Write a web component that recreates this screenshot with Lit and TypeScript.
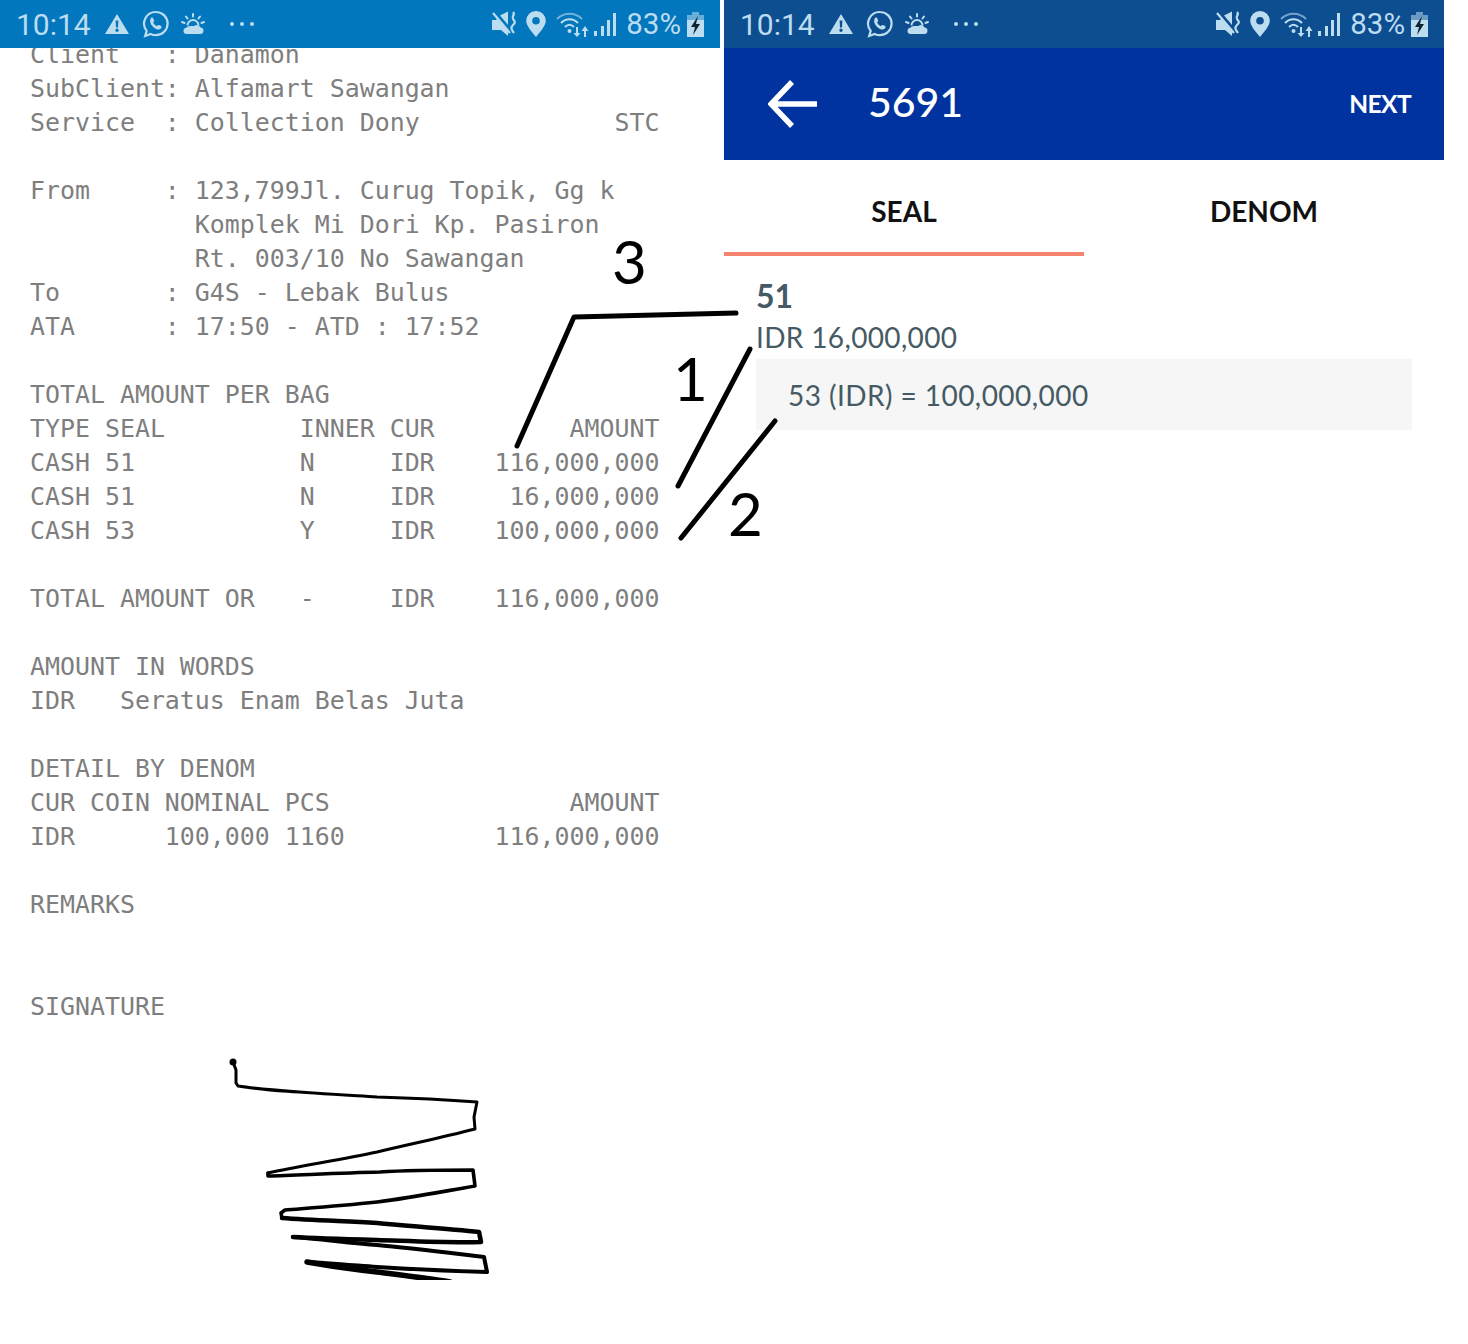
import { LitElement, css, html, svg } from "lit";
import { customElement } from "lit/decorators.js";

const RECEIPT = [
  "Client   : Danamon",
  "SubClient: Alfamart Sawangan",
  "Service  : Collection Dony             STC",
  "",
  "From     : 123,799Jl. Curug Topik, Gg k",
  "           Komplek Mi Dori Kp. Pasiron",
  "           Rt. 003/10 No Sawangan",
  "To       : G4S - Lebak Bulus",
  "ATA      : 17:50 - ATD : 17:52",
  "",
  "TOTAL AMOUNT PER BAG",
  "TYPE SEAL         INNER CUR         AMOUNT",
  "CASH 51           N     IDR    116,000,000",
  "CASH 51           N     IDR     16,000,000",
  "CASH 53           Y     IDR    100,000,000",
  "",
  "TOTAL AMOUNT OR   -     IDR    116,000,000",
  "",
  "AMOUNT IN WORDS",
  "IDR   Seratus Enam Belas Juta",
  "",
  "DETAIL BY DENOM",
  "CUR COIN NOMINAL PCS                AMOUNT",
  "IDR      100,000 1160          116,000,000",
  "",
  "REMARKS",
  "",
  "",
  "SIGNATURE",
].join("\n");

const statusBar = (cls: string) => html`
  <div class="status ${cls}">
    <span class="time">10:14</span>
    <svg class="ic" style="margin-left:14px" width="24" height="22" viewBox="0 0 24 22">
      <path fill="currentColor" fill-rule="evenodd" d="M12 1 24 21H0ZM10.6 7.5l.4 7h2l.4-7ZM12 15.5a1.7 1.7 0 1 0 0 3.4 1.7 1.7 0 0 0 0-3.4Z" />
    </svg>
    <svg class="ic" style="margin-left:13px" width="28" height="28" viewBox="0 0 28 28">
      <path fill="none" stroke="currentColor" stroke-width="2.2" d="M14 2a11.6 11.6 0 0 1 0 23.2c-2 0-3.800-.5-5.400-1.300L3.200 26l1.500-5.100A11.600 11.600 0 0 1 14 2Z" />
      <path fill="currentColor" d="M10 7.500c.7 0 1 .2 1.300 1l.8 2c.1.500 0 .8-.3 1.200l-.7.800c.9 1.700 2.200 2.900 3.900 3.800l.9-1c.3-.3.700-.4 1.100-.2l2 1c.5.300.7.500.6 1-.2 1.600-1.400 2.500-3 2.500-3.800-.2-8.200-4.400-8.500-8.400 0-1.700.7-3.700 1.900-3.700Z" />
    </svg>
    <svg class="ic" style="margin-left:11px" width="24" height="22" viewBox="0 0 24 22">
      <path fill="currentColor" d="M5 21h14a3.200 3.200 0 0 0 .5-6.400A4 4 0 0 0 16 12c-1 0-1.800.4-2.500 1H9.300a4.500 4.500 0 0 0-4 1.700A3.200 3.200 0 0 0 5 21Z" />
      <path fill="currentColor" d="M5.500 12.500a6.500 6.500 0 0 1 13 0h-2a4.500 4.500 0 0 0-9 0Z" />
      <path fill="none" stroke="currentColor" stroke-width="2" stroke-linecap="round" d="M12 1v2.500M5 3.500l1.500 2M19 3.500l-1.500 2M1 9l2.500 1M23 9l-2.500 1" />
    </svg>
    <span class="dots"><i></i><i></i><i></i></span>
    <span class="spacer"></span>
    <svg class="ic" width="26" height="26" viewBox="0 0 26 26">
      <path fill="currentColor" d="M0 9h4l1-1 11 11v6l-7-6H0ZM8 4.500l8-4v13.500Z" />
      <path fill="none" stroke="currentColor" stroke-width="2.200" d="M1 2l17 20" />
      <path fill="none" stroke="currentColor" stroke-width="2.200" d="M21 1c3 3-2 4 0 7s3 3 0 6-1 5 1 8" />
    </svg>
    <svg class="ic" style="margin-left:8px" width="20" height="26" viewBox="0 0 20 26">
      <path fill="currentColor" fill-rule="evenodd" d="M10 0a9.800 9.800 0 0 1 9.800 9.800C19.800 15 14 21 10 26 6 21 .2 15 .2 9.800A9.800 9.800 0 0 1 10 0Zm0 6a3.800 3.800 0 1 0 0 7.600A3.800 3.800 0 0 0 10 6Z" />
    </svg>
    <svg class="ic" style="margin-left:10px" width="34" height="26" viewBox="0 0 34 26">
      <g fill="none" stroke="currentColor" stroke-width="2">
        <path opacity=".6" d="M1 8c7-7 18-7 25 0" />
        <path d="M5 12c5-5 12-5 17 0M9 16c3-3 6-3 9 0" />
      </g>
      <circle cx="13.500" cy="20" r="2" fill="currentColor" />
      <path fill="currentColor" d="M20 16h2v6h2.500l-3.500 4-3.500-4H20ZM28 26h2v-6h2.500L29 15l-3.500 5H28Z" />
    </svg>
    <svg class="ic" style="margin-left:3px" width="24" height="26" viewBox="0 0 24 26">
      <path fill="currentColor" d="M1 20h3v5H1ZM8 15h3v10H8ZM14 9h3v16h-3ZM20 2h3v23h-3Z" />
    </svg>
    <span class="pct">83%</span>
    <svg class="ic" style="margin-left:6px" width="17" height="25" viewBox="0 0 17 25">
      <path fill="currentColor" opacity=".55" d="M5 0h7v3h5v5H0V3h5Z" />
      <path fill="currentColor" d="M0 8h17v17H0Z" />
      <path fill="#10242f" d="M11 4 4 15h4l-2 8 7-11H9Z" />
    </svg>
  </div>
`;

const SIGNATURE_PATHS = [
  ["M23 22 26 30 26 43 28 46C60 51 100 53 167 57 200 58 240 60 267 62L264 77 265 89C230 98 200 104 167 112 130 120 90 126 58 133", 3],
  ["M58 133 58 136C90 135 130 133 170 132 200 130 240 130 263 130L265 146C230 152 200 158 167 162 130 166 100 168 75 170L71 173 72 178", 3.600],
  ["M72 178C100 180 130 181 167 183 200 186 240 189 269 192L271 202C240 203 200 201 167 200 130 199 100 198 83 197", 4.600],
  ["M83 197C110 199 140 203 167 205 200 208 240 213 274 217L277 232C240 231 200 229 167 227 140 225 115 223 97 222", 4],
  ["M97 222C120 226 140 229 167 232 190 235 215 238 240 242", 5.500],
] as const;

const ANNOTATIONS = [
  "M517 446 574 317 736 313",
  "M750 349 678 486",
  "M775 421 681 538",
];

@customElement("app-root")
export class AppRoot extends LitElement {
  static styles = css`
    :host {
      display: block;
      position: relative;
      width: 1468px;
      height: 1344px;
      background: #fff;
      overflow: hidden;
    }

    .phones {
      display: flex;
      gap: 4px;
      width: 1444px;
      height: 1280px;
    }

    .phone {
      width: 720px;
      display: flex;
      flex-direction: column;
      overflow: hidden;
    }

    .status {
      flex: none;
      height: 48px;
      padding: 0 16px;
      box-sizing: border-box;
      display: flex;
      align-items: center;
      font-family: Roboto, sans-serif;
      font-size: 30px;
      color: #bcdcf0;
    }

    .status.light {
      background: #0277bd;
    }

    .status.dark {
      background: #0d4e90;
    }

    .ic {
      flex: none;
      display: block;
    }

    .spacer {
      flex: 1;
    }

    .dots {
      display: flex;
      gap: 6px;
      margin-left: 25px;
    }

    .dots i {
      width: 4px;
      height: 4px;
      border-radius: 50%;
      background: currentColor;
    }

    .pct {
      margin-left: 9px;
      font-size: 29.500px;
      line-height: 50px;
    }

    .receipt {
      flex: 1;
      min-height: 0;
      overflow: hidden;
    }

    pre {
      margin: -10px 0 0;
      padding-left: 30px;
      font-family: "DejaVu Sans Mono", monospace;
      font-size: 24.9px;
      line-height: 34px;
      color: #7e7e7e;
    }

    .sig {
      display: block;
      margin: 16px 0 0 210px;
    }

    .appbar {
      flex: none;
      height: 112px;
      display: flex;
      align-items: center;
      padding: 0 33px 0 44px;
      background: #0033a0;
      color: #fff;
      font-family: Lato, sans-serif;
    }

    .appbar h1 {
      flex: 1;
      margin: 0 0 6px 51px;
      font-size: 41px;
      font-weight: 500;
    }

    .next {
      margin-bottom: 2px;
      font-size: 24.500px;
      font-weight: 700;
      letter-spacing: -0.6px;
    }

    .tabs {
      flex: none;
      display: flex;
      height: 96px;
      font-family: Lato, sans-serif;
      font-size: 28px;
      font-weight: 700;
      color: #111;
    }

    .tab {
      flex: 1;
      display: flex;
      align-items: center;
      justify-content: center;
      box-sizing: border-box;
      padding-top: 6px;
    }

    .tab.active {
      border-bottom: 4px solid #f4846e;
      padding-top: 10px;
    }

    .seal {
      padding: 20px 32px 0;
      font-family: Lato, sans-serif;
      color: #455a64;
    }

    .seal-id {
      font-size: 32px;
      font-weight: 700;
      line-height: 40px;
    }

    .seal-total {
      font-size: 28px;
      line-height: 43px;
      letter-spacing: 0.35px;
    }

    .seal-row {
      height: 71px;
      display: flex;
      align-items: center;
      padding-left: 32px;
      background: #f6f6f6;
      font-size: 28px;
      letter-spacing: 0.45px;
    }

    .marks {
      position: absolute;
      inset: 0;
      pointer-events: none;
    }

    .num {
      position: absolute;
      font-family: Lato, sans-serif;
      font-size: 60px;
      line-height: 60px;
      color: #000;
    }

    .n1 {
      left: 673px;
      top: 348px;
    }

    .n2 {
      left: 728px;
      top: 483px;
    }

    .n3 {
      left: 612px;
      top: 231px;
    }
  `;

  render() {
    return html`
      <div class="phones">
        <section class="phone">
          ${statusBar("light")}
          <div class="receipt">
            <pre>${RECEIPT}</pre>
            <svg class="sig" width="300" height="240" viewBox="0 0 300 240">
              <circle cx="23" cy="22" r="3.500" fill="#000" />
              ${SIGNATURE_PATHS.map(
                ([d, w]) => svg`<path d=${d} fill="none" stroke="#000" stroke-width=${w} stroke-linecap="round" stroke-linejoin="round" />`,
              )}
            </svg>
          </div>
        </section>
        <section class="phone">
          ${statusBar("dark")}
          <header class="appbar">
            <svg class="ic" width="49" height="48" viewBox="0 0 49 48">
              <path d="M24 2 3 24l21 22M3 24h46" fill="none" stroke="#fff" stroke-width="5.500" />
            </svg>
            <h1>5691</h1>
            <span class="next">NEXT</span>
          </header>
          <nav class="tabs">
            <div class="tab active">SEAL</div>
            <div class="tab">DENOM</div>
          </nav>
          <div class="seal">
            <div class="seal-id">51</div>
            <div class="seal-total">IDR 16,000,000</div>
            <div class="seal-row">53 (IDR) = 100,000,000</div>
          </div>
        </section>
      </div>
      <div class="marks">
        <svg width="1468" height="1344" viewBox="0 0 1468 1344">
          ${ANNOTATIONS.map(
            (d) => svg`<path d=${d} fill="none" stroke="#000" stroke-width="5" stroke-linecap="round" stroke-linejoin="round" />`,
          )}
        </svg>
        <span class="num n1">1</span>
        <span class="num n2">2</span>
        <span class="num n3">3</span>
      </div>
    `;
  }
}
